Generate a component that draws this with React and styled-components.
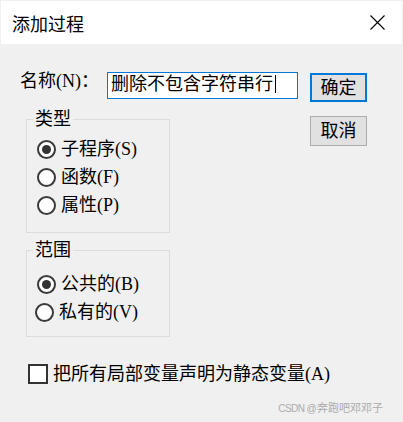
import React from 'react';
import styled, { createGlobalStyle } from 'styled-components';

const GlobalStyle = createGlobalStyle`
  html, body {
    margin: 0;
    padding: 0;
    background: #f0f0f0;
  }
  body {
    width: 403px;
    height: 422px;
    overflow: hidden;
  }
`;

const Window = styled.div`
  width: 403px;
  height: 422px;
  box-sizing: border-box;
  padding: 1px 1px 0 1px;
  background: #f0f0f0;
  display: flex;
  flex-direction: column;
  font-family: "Liberation Serif", "Noto Sans CJK SC", serif;
  font-size: 18px;
  color: #000;
`;

const TitleBar = styled.div`
  height: 43px;
  flex-shrink: 0;
  background: #fff;
  display: flex;
  align-items: center;
  justify-content: space-between;
  padding: 0 17px 0 11px;
`;

const Title = styled.div`
  font-family: "Noto Sans CJK SC", sans-serif;
  font-size: 18px;
  line-height: 20px;
  color: #000;
`;

const Body = styled.div`
  flex: 1;
  display: flex;
  flex-direction: column;
  padding: 28px 0 0 19px;
`;

const TopArea = styled.div`
  display: flex;
  align-items: flex-start;
`;

const MainColumn = styled.div`
  width: 278px;
  flex-shrink: 0;
  display: flex;
  flex-direction: column;
`;

const NameRow = styled.div`
  display: flex;
  align-items: flex-start;
`;

const NameLabel = styled.div`
  width: 87px;
  line-height: 18px;
`;

const TextBox = styled.div`
  width: 191px;
  height: 27px;
  box-sizing: border-box;
  border: 1px solid #0078d7;
  background: #fff;
  display: flex;
  align-items: center;
  padding: 0 0 3px 3px;
  line-height: 18px;
  white-space: nowrap;
`;

const Caret = styled.span`
  display: inline-block;
  width: 1px;
  height: 18px;
  margin-left: 2px;
  background: #000;
`;

const ButtonColumn = styled.div`
  display: flex;
  flex-direction: column;
  gap: 14px;
  margin: 1px 0 0 12px;
`;

const Button = styled.div`
  width: 57px;
  height: ${(p) => (p.$primary ? '29px' : '30px')};
  box-sizing: border-box;
  border: ${(p) => (p.$primary ? '2px solid #0078d7' : '1px solid #adadad')};
  background: #e1e1e1;
  display: flex;
  align-items: center;
  justify-content: center;
  line-height: 18px;
`;

const Group = styled.fieldset`
  width: 144px;
  box-sizing: border-box;
  margin: ${(p) => p.$top}px 0 0 6px;
  padding: ${(p) => p.$padTop}px 0 ${(p) => p.$padBottom}px 0;
  border: 1px solid #dcdcdc;
  min-inline-size: 0;
`;

const Legend = styled.legend`
  margin-left: 6px;
  padding: 0 2px;
  line-height: 18px;
`;

const RadioRow = styled.div`
  height: 28px;
  display: flex;
  align-items: center;
  gap: 5px;
  padding-left: ${(p) => p.$indent ?? 10}px;
  line-height: 18px;
`;

const RadioCircle = styled.span`
  width: 19px;
  height: 19px;
  box-sizing: border-box;
  border: 2px solid #3a3a3a;
  border-radius: 50%;
  background: #fff;
  display: flex;
  align-items: center;
  justify-content: center;
  flex-shrink: 0;

  &::after {
    content: '';
    width: 9px;
    height: 9px;
    border-radius: 50%;
    background: ${(p) => (p.$checked ? '#333' : 'transparent')};
  }
`;

const CheckRow = styled.div`
  display: flex;
  align-items: center;
  gap: 5px;
  height: 20px;
  margin: 27px 0 0 8px;
  line-height: 18px;
  white-space: nowrap;
`;

const CheckBox = styled.span`
  width: 20px;
  height: 20px;
  box-sizing: border-box;
  border: 2px solid #333;
  background: #fff;
  flex-shrink: 0;
`;

const Watermark = styled.div`
  margin: auto 19px 7px 0;
  align-self: flex-end;
  font-family: "Liberation Sans", "Noto Sans CJK SC", sans-serif;
  font-size: 11px;
  line-height: 13px;
  color: #ababab;
  white-space: nowrap;
`;

const WatermarkLatin = styled.span`
  font-size: 10px;
  letter-spacing: -0.6px;
  margin-right: 1px;
`;

function CloseIcon() {
  return (
    <svg width="15" height="15" viewBox="0 0 15 15">
      <path d="M0.5 0.5 L14.5 14.5 M14.5 0.5 L0.5 14.5" stroke="#000" strokeWidth="1.1" fill="none" />
    </svg>
  );
}

function Radio({ label, checked, indent }) {
  return (
    <RadioRow $indent={indent}>
      <RadioCircle $checked={checked} />
      <span>{label}</span>
    </RadioRow>
  );
}

export default function App() {
  return (
    <>
      <GlobalStyle />
      <Window>
        <TitleBar>
          <Title>添加过程</Title>
          <CloseIcon />
        </TitleBar>
        <Body>
          <TopArea>
            <MainColumn>
              <NameRow>
                <NameLabel>名称(N)：</NameLabel>
                <TextBox>
                  删除不包含字符串行
                  <Caret />
                </TextBox>
              </NameRow>

              <Group $top={11} $padTop={7} $padBottom={13}>
                <Legend>类型</Legend>
                <Radio label="子程序(S)" checked />
                <Radio label="函数(F)" />
                <Radio label="属性(P)" />
              </Group>

              <Group $top={8} $padTop={11} $padBottom={10}>
                <Legend>范围</Legend>
                <Radio label="公共的(B)" checked />
                <Radio label="私有的(V)" indent={8} />
              </Group>

              <CheckRow>
                <CheckBox />
                <span>把所有局部变量声明为静态变量(A)</span>
              </CheckRow>
            </MainColumn>

            <ButtonColumn>
              <Button $primary>确定</Button>
              <Button>取消</Button>
            </ButtonColumn>
          </TopArea>
          <Watermark>
            <WatermarkLatin>CSDN @</WatermarkLatin>奔跑吧邓邓子
          </Watermark>
        </Body>
      </Window>
    </>
  );
}
